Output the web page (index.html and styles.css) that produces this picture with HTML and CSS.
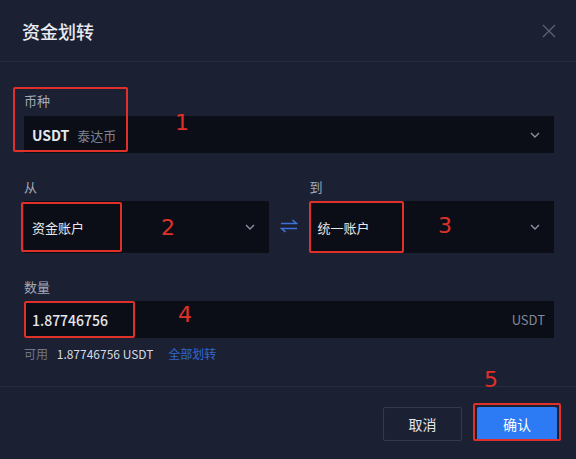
FILE: index.html
```html
<!DOCTYPE html>
<html lang="zh-CN">
<head>
    <meta charset="UTF-8">
    <meta name="viewport" content="width=device-width, initial-scale=1.0">
    <title>资金划转</title>
    <link rel="stylesheet" href="styles.css">
</head>
<body>
    <div class="modal">
        <div class="modal-header">
            <h2>资金划转</h2>
            <button class="close-btn" aria-label="关闭">
                <svg width="14" height="14" viewBox="0 0 14 14"><path d="M1 1L13 13M13 1L1 13" stroke="#5b6275" stroke-width="1.3" fill="none"/></svg>
            </button>
        </div>

        <div class="modal-body">
            <div class="field">
                <label>币种</label>
                <div class="select short">
                    <span class="value"><b>USDT</b><span class="sub">泰达币</span></span>
                    <svg class="chevron" width="10" height="6" viewBox="0 0 10 6"><path d="M1 1L5 5L9 1" stroke="#8b91a1" stroke-width="1.4" fill="none"/></svg>
                </div>
            </div>

            <div class="transfer-row">
                <div class="field">
                    <label>从</label>
                    <div class="select tall">
                        <span class="value">资金账户</span>
                        <svg class="chevron" width="10" height="6" viewBox="0 0 10 6"><path d="M1 1L5 5L9 1" stroke="#8b91a1" stroke-width="1.4" fill="none"/></svg>
                    </div>
                </div>
                <div class="swap">
                    <svg width="18" height="14" viewBox="0 0 18 14"><path d="M1 4.5H16.5L12.5 1M17 9.5H1.5L5.5 13" stroke="#3f72d8" stroke-width="1.6" fill="none"/></svg>
                </div>
                <div class="field">
                    <label>到</label>
                    <div class="select tall">
                        <span class="value">统一账户</span>
                        <svg class="chevron" width="10" height="6" viewBox="0 0 10 6"><path d="M1 1L5 5L9 1" stroke="#8b91a1" stroke-width="1.4" fill="none"/></svg>
                    </div>
                </div>
            </div>

            <div class="field">
                <label>数量</label>
                <div class="select short">
                    <span class="value amount">1.87746756</span>
                    <span class="unit">USDT</span>
                </div>
            </div>

            <p class="available">
                <span class="muted">可用</span>
                <span class="balance">1.87746756 USDT</span>
                <a class="all-link">全部划转</a>
            </p>
        </div>

        <div class="modal-footer">
            <button class="btn btn-cancel">取消</button>
            <button class="btn btn-confirm">确认</button>
        </div>

        <!-- annotations drawn over the dialog -->
        <div class="mark mark-1"></div>
        <div class="mark mark-2"></div>
        <div class="mark mark-3"></div>
        <div class="mark mark-4"></div>
        <div class="mark mark-5"></div>
        <span class="num num-1">1</span>
        <span class="num num-2">2</span>
        <span class="num num-3">3</span>
        <span class="num num-4">4</span>
        <span class="num num-5">5</span>
    </div>
</body>
</html>
```

FILE: styles.css
```css
body {
    margin: 0;
    background-color: #1b2133;
    font-family: "Noto Sans CJK SC", "Noto Sans", sans-serif;
    color: #e4e7ee;
}

.modal {
    position: relative;
    width: 576px;
    height: 459px;
    background-color: #1b2133;
}

.modal-header {
    height: 62px;
    display: flex;
    align-items: center;
    justify-content: space-between;
    padding: 0 20px 0 22px;
    border-bottom: 1px solid #252c3f;
    box-sizing: border-box;
}

.modal-header h2 {
    margin: 0;
    font-size: 18px;
    font-weight: 500;
    color: #e8eaf0;
}

.close-btn {
    background: none;
    border: none;
    padding: 0;
    display: flex;
}

.modal-body {
    padding: 29px 22px 0 24px;
}

.field label {
    display: block;
    font-size: 13px;
    line-height: 20px;
    color: #a4aab8;
    margin-bottom: 5px;
}

.select {
    display: flex;
    align-items: center;
    justify-content: space-between;
    background-color: #0b0e16;
    padding: 0 14px 0 8px;
    box-sizing: border-box;
}

.select.short {
    height: 37px;
}

.select.tall {
    height: 52px;
}

.select .value {
    font-size: 13px;
    color: #e6e8ee;
}

.select .value b {
    font-weight: 600;
    font-size: 14px;
}

.select .sub {
    margin-left: 8px;
    color: #7d8393;
}

.select .amount {
    font-size: 14px;
    font-weight: 500;
}

.select .unit {
    font-size: 13px;
    color: #80879a;
    margin-right: -5px;
}

.transfer-row {
    display: grid;
    grid-template-columns: 1fr 41px 1fr;
    margin-top: 24px;
}

.transfer-row .field label {
    margin-bottom: 4px;
}

.transfer-row + .field {
    margin-top: 24px;
}

.transfer-row + .field label {
    margin-bottom: 4px;
}

.swap {
    display: flex;
    align-items: flex-end;
    justify-content: center;
    padding-bottom: 20px;
}

.available {
    margin: 6px 0 0;
    font-size: 12px;
    line-height: 20px;
}

.available .muted {
    color: #6f7688;
    margin-right: 6px;
}

.available .balance {
    color: #d6d9e1;
    margin-right: 12px;
}

.available .all-link {
    color: #3467cf;
}

.modal-footer {
    margin-top: 22px;
    border-top: 1px solid #252c3f;
    display: flex;
    justify-content: flex-end;
    gap: 15px;
    padding: 20px 19px 0 0;
}

.btn {
    height: 34px;
    width: 80px;
    border-radius: 2px;
    font-family: inherit;
    font-size: 14px;
    cursor: pointer;
}

.btn-cancel {
    background: transparent;
    border: 1px solid #333a4d;
    color: #e2e5ec;
    width: 79px;
}

.btn-confirm {
    background-color: #2c7bf5;
    border: none;
    color: #ffffff;
}

.mark {
    position: absolute;
    border: 2px solid #e0302a;
    border-radius: 2px;
    box-sizing: border-box;
}

.mark-1 { left: 13px; top: 87px; width: 115px; height: 65px; }
.mark-2 { left: 21px; top: 202px; width: 101px; height: 50px; }
.mark-3 { left: 309px; top: 201px; width: 95px; height: 52px; }
.mark-4 { left: 24px; top: 301px; width: 111px; height: 37px; }
.mark-5 { left: 473px; top: 403px; width: 88px; height: 38px; }

.num {
    position: absolute;
    font-family: "DejaVu Sans", sans-serif;
    font-size: 22px;
    line-height: 1;
    color: #e0302a;
}

.num-1 { left: 175px; top: 112px; }
.num-2 { left: 161px; top: 217px; }
.num-3 { left: 438px; top: 215px; }
.num-4 { left: 178px; top: 304px; }
.num-5 { left: 484px; top: 369px; }
```
